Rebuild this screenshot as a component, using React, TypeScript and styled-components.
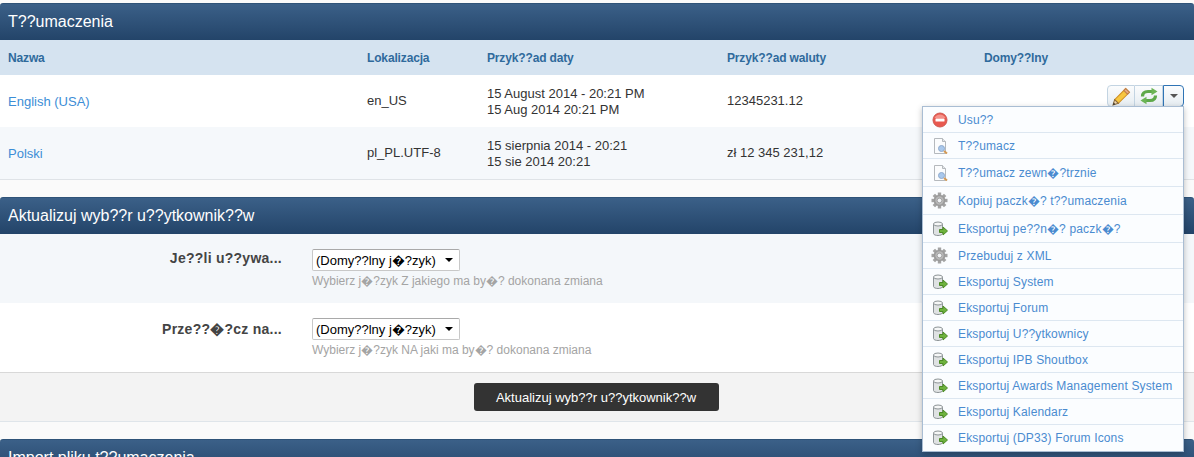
import React from "react";
import styled, { createGlobalStyle } from "styled-components";

const GlobalStyle = createGlobalStyle`
  html, body {
    margin: 0;
    padding: 0;
    background: #fafafa;
    font-family: "Liberation Sans", Arial, sans-serif;
  }
`;

const RemoveIcon = () => (
  <svg width="16" height="16" viewBox="0 0 16 16">
    <circle cx="8" cy="8" r="7" fill="#e8584f" stroke="#cf5a52" />
    <path d="M2.5 6A6 6 0 0 1 13.500 6Z" fill="#f4928a" />
    <rect x="3.500" y="6.500" width="9" height="3" rx="0.5" fill="#fff" />
  </svg>
);

const DocIcon = () => (
  <svg width="16" height="16" viewBox="0 0 16 16">
    <path d="M2.500.5h8l3 3v12h-11z" fill="#fbfcfd" stroke="#b5b9bd" />
    <path d="M10.500.5v3h3" fill="#e4e7ea" stroke="#b5b9bd" />
    <circle cx="9.500" cy="10.500" r="3" fill="#a9c8ec" stroke="#8faacd" />
    <path d="M12 13l3 2.500" stroke="#d39a55" strokeWidth="2" />
  </svg>
);

const gearTeeth = [0, 45, 90, 135];

const GearIcon = () => (
  <svg width="17" height="17" viewBox="0 0 17 17">
    {gearTeeth.map((angle) => (
      <rect key={angle} x="6.800" y="0.500" width="3.400" height="16" fill="#a3a3a3" transform={`rotate(${angle} 8.500 8.500)`} />
    ))}
    <circle cx="8.500" cy="8.500" r="5.800" fill="#9a9a9a" />
    <circle cx="8.500" cy="8.500" r="4.200" fill="#b8b8b8" />
    <circle cx="8.500" cy="8.500" r="2.300" fill="#f1f3f5" stroke="#8a8a8a" strokeWidth="0.6" />
  </svg>
);

const ExportIcon = () => (
  <svg width="16" height="16" viewBox="0 0 16 16">
    <path d="M1.500 3v9.500c0 1.200 2.200 2 4.500 2s4.500-.8 4.500-2V3z" fill="#dfe2e3" stroke="#8d9497" />
    <ellipse cx="6" cy="3" rx="4.500" ry="2" fill="#f6f7f7" stroke="#8d9497" />
    <path d="M7.500 8.500h3.500V6l4.500 4-4.500 4v-2.500H7.500z" fill="#6eb23d" stroke="#4c8a25" />
  </svg>
);

const PencilIcon = () => (
  <svg width="19" height="19" viewBox="0 0 18 18">
    <path d="M13 1.500l3.500 3.500L6 15.500 2.500 12z" fill="#f7c63f" stroke="#d08f22" />
    <path d="M13 1.500l3.500 3.500-1.800 1.800-3.500-3.500z" fill="#ecae82" stroke="#c07f4a" />
    <path d="M2.500 12L1 17l5-1.500z" fill="#f3d9b0" stroke="#8a6a3a" />
    <path d="M1 17l.6-2.200 1.600 1.600z" fill="#333" />
  </svg>
);

const RefreshIcon = () => (
  <svg width="20" height="18" viewBox="0 0 20 18">
    <path d="M3.500 9.500C3.500 6 6 4.500 9 4.500h4" fill="none" stroke="#5ea94a" strokeWidth="3.200" />
    <path d="M12.500.8L18.500 4.500l-6 3.700z" fill="#6cb556" />
    <g transform="rotate(180 10 9)">
      <path d="M3.500 9.500C3.500 6 6 4.500 9 4.500h4" fill="none" stroke="#5ea94a" strokeWidth="3.200" />
      <path d="M12.500.8L18.500 4.500l-6 3.700z" fill="#6cb556" />
    </g>
  </svg>
);

const Page = styled.div`
  position: relative;
  width: 1194px;
  height: 457px;
  padding-top: 3px;
  box-sizing: border-box;
  overflow: hidden;
`;

const SectionTitle = styled.h2`
  margin: 0;
  height: 37px;
  padding-left: 8px;
  box-sizing: border-box;
  border-radius: 3px 3px 0 0;
  background: linear-gradient(#3b6088, #234469);
  border-top: 1px solid #2f5378;
  color: #fff;
  font-size: 16px;
  font-weight: 400;
  line-height: 36px;
`;

const Grid = "359px 120px 240px 257px 1fr";

const HeadRow = styled.div`
  display: grid;
  grid-template-columns: ${Grid};
  height: 35px;
  padding-left: 8px;
  align-items: center;
  background: #d5e3f0;
`;

const HeadCell = styled.div`
  color: #2f6a9c;
  font-size: 12px;
  font-weight: 700;
  letter-spacing: -0.15px;
`;

const LangRow = styled.div<{ $alt?: boolean }>`
  display: grid;
  grid-template-columns: ${Grid};
  height: ${(p) => (p.$alt ? "53px" : "52px")};
  padding-left: 8px;
  box-sizing: border-box;
  align-items: center;
  background: ${(p) => (p.$alt ? "#f5f8fb" : "#fff")};
  border-bottom: ${(p) => (p.$alt ? "1px solid #dfe3e7" : "none")};
`;

const LangName = styled.a`
  color: #3c8dd6;
  font-size: 13px;
`;

const Cell = styled.div`
  color: #333;
  font-size: 13px;
  line-height: 16px;
`;

const DateCell = styled(Cell)`
  padding-top: 2px;
`;

const Actions = styled.div`
  display: flex;
  justify-content: flex-end;
  padding-right: 10px;
  margin-top: -10px;
`;

const ActionButton = styled.span<{ $narrow?: boolean }>`
  display: flex;
  align-items: center;
  justify-content: center;
  width: ${(p) => (p.$narrow ? "21px" : "28px")};
  height: 22px;
  box-sizing: border-box;
  background: linear-gradient(#fbfcfd, #e6edf2);
  border: 1px solid ${(p) => (p.$narrow ? "#2f74b5" : "#c3d4e2")};
  border-left-width: ${(p) => (p.$narrow ? "1px" : "0")};
  &:first-child {
    border-left-width: 1px;
    border-radius: 4px 0 0 4px;
  }
  &:last-child {
    border-radius: 0 4px 4px 0;
  }
`;

const Caret = styled.span`
  width: 0;
  height: 0;
  border-left: 4px solid transparent;
  border-right: 4px solid transparent;
  border-top: 4px solid #555;
`;

const Section = styled.section`
  margin-top: 17px;
`;

const FormRow = styled.div<{ $alt?: boolean }>`
  display: flex;
  height: 69px;
  box-sizing: border-box;
  padding-top: 15px;
  background: ${(p) => (p.$alt ? "#f4f7fa" : "#fff")};
`;

const FormLabel = styled.label`
  width: 282px;
  margin-right: 30px;
  padding-top: 1px;
  text-align: right;
  color: #444;
  font-size: 14px;
  font-weight: 700;
  letter-spacing: 0.25px;
`;

const SelectBox = styled.div`
  position: relative;
  width: 148px;
  height: 22px;
  &::after {
    content: "";
    position: absolute;
    top: 9px;
    right: 7px;
    border-left: 4px solid transparent;
    border-right: 4px solid transparent;
    border-top: 4px solid #000;
    pointer-events: none;
  }
`;

const LangSelect = styled.select`
  display: block;
  width: 100%;
  height: 100%;
  padding: 0 0 0 3px;
  appearance: none;
  border: 1px solid #c8c8c8;
  border-top-color: #a9a9a9;
  border-radius: 2px;
  font-family: "Liberation Sans", Arial, sans-serif;
  font-size: 13px;
  background: #fff;
  color: #000;
`;

const Help = styled.div`
  margin-top: 1px;
  color: #a4a4a4;
  font-size: 12px;
`;

const FormFooter = styled.div`
  display: flex;
  justify-content: center;
  height: 50px;
  box-sizing: border-box;
  padding: 10px 2px 0 0;
  background: #f3f3f3;
  border-top: 1px solid #d8d8d8;
  border-bottom: 1px solid #dfe5ea;
`;

const SubmitButton = styled.button`
  width: 245px;
  height: 28px;
  padding: 0;
  border: 0;
  border-radius: 3px;
  background: #333;
  color: #fff;
  font-family: "Liberation Sans", Arial, sans-serif;
  font-size: 13px;
`;

const Menu = styled.ul`
  position: absolute;
  top: 106px;
  left: 922px;
  width: 262px;
  margin: 0;
  padding: 0;
  box-sizing: border-box;
  list-style: none;
  background: #fbfdff;
  border: 1px solid #a9bdd3;
  box-shadow: 0 2px 6px rgba(0, 0, 0, 0.25);
`;

const MenuItem = styled.li<{ $tall?: boolean }>`
  display: flex;
  align-items: center;
  height: ${(p) => (p.$tall ? "28px" : "26px")};
  padding-left: 8px;
  box-sizing: border-box;
  border-bottom: 1px solid #dde7f1;
  color: #4a8bd0;
  font-size: 12px;
  letter-spacing: 0.15px;
  &:last-child {
    border-bottom: 0;
  }
`;

const MenuIcon = styled.span`
  display: flex;
  justify-content: center;
  width: 17px;
  margin-right: 10px;
`;

const menuItems: [React.ReactNode, string, boolean?][] = [
  [<RemoveIcon />, "Usu??"],
  [<DocIcon />, "T??umacz"],
  [<DocIcon />, "T??umacz zewn�?trznie", true],
  [<GearIcon />, "Kopiuj paczk�? t??umaczenia", true],
  [<ExportIcon />, "Eksportuj pe??n�? paczk�?", true],
  [<GearIcon />, "Przebuduj z XML"],
  [<ExportIcon />, "Eksportuj System"],
  [<ExportIcon />, "Eksportuj Forum"],
  [<ExportIcon />, "Eksportuj U??ytkownicy"],
  [<ExportIcon />, "Eksportuj IPB Shoutbox"],
  [<ExportIcon />, "Eksportuj Awards Management System"],
  [<ExportIcon />, "Eksportuj Kalendarz"],
  [<ExportIcon />, "Eksportuj (DP33) Forum Icons"],
];

export default function App() {
  return (
    <Page>
      <GlobalStyle />
      <section>
        <SectionTitle>T??umaczenia</SectionTitle>
        <HeadRow>
          <HeadCell>Nazwa</HeadCell>
          <HeadCell>Lokalizacja</HeadCell>
          <HeadCell>Przyk??ad daty</HeadCell>
          <HeadCell>Przyk??ad waluty</HeadCell>
          <HeadCell>Domy??lny</HeadCell>
        </HeadRow>
        <LangRow>
          <LangName>English (USA)</LangName>
          <Cell>en_US</Cell>
          <DateCell>
            15 August 2014 - 20:21 PM
            <br />
            15 Aug 2014 20:21 PM
          </DateCell>
          <Cell>12345231.12</Cell>
          <Actions>
            <ActionButton>
              <PencilIcon />
            </ActionButton>
            <ActionButton>
              <RefreshIcon />
            </ActionButton>
            <ActionButton $narrow>
              <Caret />
            </ActionButton>
          </Actions>
        </LangRow>
        <LangRow $alt>
          <LangName>Polski</LangName>
          <Cell>pl_PL.UTF-8</Cell>
          <DateCell>
            15 sierpnia 2014 - 20:21
            <br />
            15 sie 2014 20:21
          </DateCell>
          <Cell>zł 12 345 231,12</Cell>
        </LangRow>
      </section>

      <Section>
        <SectionTitle>Aktualizuj wyb??r u??ytkownik??w</SectionTitle>
        <FormRow $alt>
          <FormLabel>Je??li u??ywa...</FormLabel>
          <div>
            <SelectBox>
              <LangSelect>
                <option>(Domy??lny j�?zyk)</option>
              </LangSelect>
            </SelectBox>
            <Help>Wybierz j�?zyk Z jakiego ma by�? dokonana zmiana</Help>
          </div>
        </FormRow>
        <FormRow>
          <FormLabel>Prze??�?cz na...</FormLabel>
          <div>
            <SelectBox>
              <LangSelect>
                <option>(Domy??lny j�?zyk)</option>
              </LangSelect>
            </SelectBox>
            <Help>Wybierz j�?zyk NA jaki ma by�? dokonana zmiana</Help>
          </div>
        </FormRow>
        <FormFooter>
          <SubmitButton>Aktualizuj wyb??r u??ytkownik??w</SubmitButton>
        </FormFooter>
      </Section>

      <Section>
        <SectionTitle>Import pliku t??umaczenia</SectionTitle>
      </Section>

      <Menu>
        {menuItems.map(([icon, label, tall]) => (
          <MenuItem key={label} $tall={tall}>
            <MenuIcon>{icon}</MenuIcon>
            {label}
          </MenuItem>
        ))}
      </Menu>
    </Page>
  );
}
